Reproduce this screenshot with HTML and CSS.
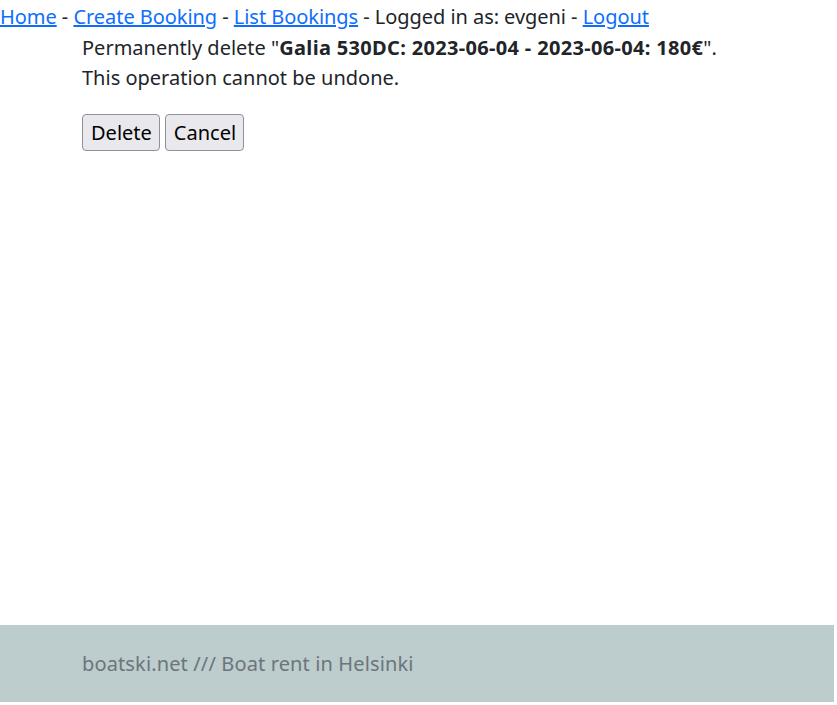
FILE: index.html
```html
<!DOCTYPE html>
<html>
<head>
<meta charset="utf-8">
<link rel="stylesheet" href="styles.css">
</head>
<body>
<div class="page">
  <nav class="nav"><a href="#">Home</a> - <a href="#">Create Booking</a> - <a href="#">List Bookings</a> - Logged in as: evgeni - <a href="#">Logout</a></nav>
  <main class="content">
    <p class="line">Permanently delete "<b>Galia 530DC: 2023-06-04 - 2023-06-04: 180€</b>".</p>
    <p class="line">This operation cannot be undone.</p>
    <div class="actions">
      <button class="btn">Delete</button>
      <button class="btn">Cancel</button>
    </div>
  </main>
  <footer class="footer">boatski.net /// Boat rent in Helsinki</footer>
</div>
</body>
</html>
```
FILE: styles.css
```css
html, body {
  margin: 0;
  padding: 0;
}
body {
  font-family: "Noto Sans", "DejaVu Sans", sans-serif;
  font-size: 20px;
  line-height: 30px;
  color: #212529;
  background: #fff;
}
.page {
  width: 834px;
  min-height: 702px;
  display: flex;
  flex-direction: column;
}
.nav {
  height: 33px;
  line-height: 34px;
  letter-spacing: -0.05px;
}
.nav a {
  color: #0d6efd;
  text-decoration: underline;
}
.content {
  flex: 1;
  padding-left: 82px;
}
.line {
  margin: 0;
  line-height: 30px;
}
.line b {
  font-weight: 700;
  letter-spacing: 0.33px;
}
.actions {
  display: flex;
  gap: 5px;
  margin-top: 21px;
}
.btn {
  font-family: "Noto Sans", "DejaVu Sans", sans-serif;
  font-size: 20px;
  line-height: 25px;
  color: #000;
  background: #e9e9ed;
  border: 1px solid #8f8f9d;
  border-radius: 4px;
  padding: 5px 7px 5px 8px;
  height: 37px;
}
.footer {
  height: 77px;
  background: #bdcccc;
  color: #6c757d;
  padding-left: 82px;
  display: flex;
  align-items: center;
  box-sizing: border-box;
  letter-spacing: 0.13px;
}
```
